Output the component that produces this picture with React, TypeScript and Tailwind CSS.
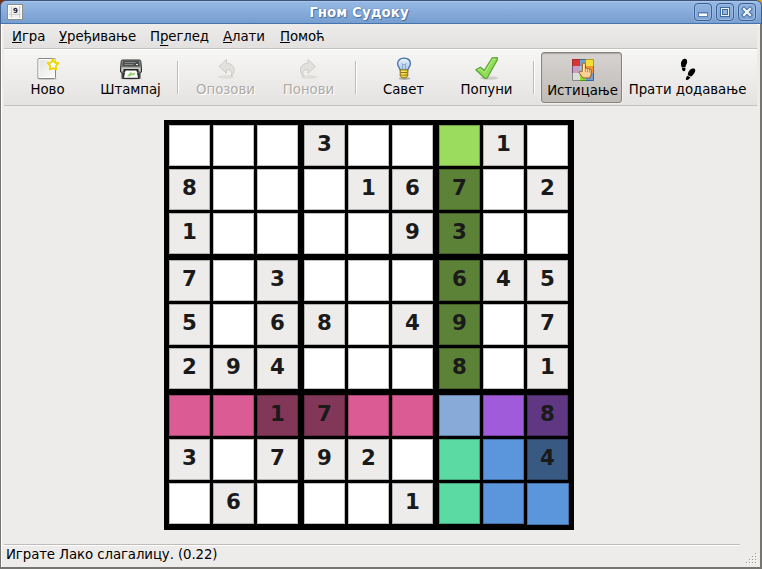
import type { ReactNode } from 'react';

const NUMBERS = [
  '...3...1.',
  '8...167.2',
  '1....93..',
  '7.3...645',
  '5.68.49.7',
  '294...8.1',
  '..17....8',
  '3.792...4',
  '.6...1...',
];

const TINTS: Record<string, string> = {
  '0-6': 'bg-[#9bdb5d]',
  '1-6': 'bg-[#5c8237]',
  '2-6': 'bg-[#5c8237]',
  '3-6': 'bg-[#5c8237]',
  '4-6': 'bg-[#5c8237]',
  '5-6': 'bg-[#5c8237]',
  '6-0': 'bg-[#db5b95]',
  '6-1': 'bg-[#db5b95]',
  '6-2': 'bg-[#823759]',
  '6-3': 'bg-[#823759]',
  '6-4': 'bg-[#db5b95]',
  '6-5': 'bg-[#db5b95]',
  '6-6': 'bg-[#87aad8]',
  '6-7': 'bg-[#a05bdb]',
  '6-8': 'bg-[#603782]',
  '7-6': 'bg-[#5bdba3]',
  '8-6': 'bg-[#5bdba3]',
  '7-7': 'bg-[#5b95db]',
  '8-7': 'bg-[#5b95db]',
  '8-8': 'bg-[#5b95db]',
  '7-8': 'bg-[#375982]',
};

function Cell({ row, col }: { row: number; col: number }) {
  const value = NUMBERS[row][col];
  const given = value !== '.';
  const tint = TINTS[`${row}-${col}`] ?? (given ? 'bg-[#edecea]' : 'bg-white');
  const last = row === 8 && col === 8;
  return (
    <div
      className={`flex items-center justify-center border border-black/25 pb-[3px] text-[21.33px] leading-none font-bold text-[#1a1a1a] ${last ? 'h-[42px] w-[42px]' : 'h-[41px] w-[41px]'} ${tint}`}
    >
      {given ? value : ''}
    </div>
  );
}

function Board() {
  const three = [0, 1, 2];
  return (
    <div className="grid h-[410px] w-[410px] shrink-0 grid-cols-[129px_129px_129px] grid-rows-[129px_129px_129px] gap-[6px] bg-black pt-[5px] pl-[5px]">
      {three.map((br) =>
        three.map((bc) => (
          <div key={`${br}${bc}`} className="grid grid-cols-[41px_41px_41px] grid-rows-[41px_41px_41px] gap-[3px]">
            {three.map((r) => three.map((c) => <Cell key={`${r}${c}`} row={br * 3 + r} col={bc * 3 + c} />))}
          </div>
        )),
      )}
    </div>
  );
}

function Tool({ icon, label, box, disabled }: { icon: ReactNode; label: string; box: string; disabled?: boolean }) {
  return (
    <div
      className={`flex shrink-0 flex-col items-center whitespace-nowrap ${box} ${disabled ? 'text-[#aeaba7] [text-shadow:1px_1px_0_#fff]' : ''}`}
    >
      {icon}
      <span className="mt-px leading-4 tracking-[-0.05px]">{label}</span>
    </div>
  );
}

function Separator() {
  return (
    <div className="flex w-3 shrink-0 justify-center pt-[11px]">
      <div className="h-[33px] w-[2px] border-l border-[#bebcb9] bg-white" />
    </div>
  );
}

const ICON = 'h-6 w-6 shrink-0';

function NewIcon() {
  return (
    <svg className={ICON} viewBox="0 0 24 24">
      <defs>
        <linearGradient id="paper" x1="0" y1="0" x2="1" y2="1">
          <stop offset="0" stopColor="#e2e2e0" />
          <stop offset="1" stopColor="#fdfdfd" />
        </linearGradient>
      </defs>
      <ellipse cx="11" cy="21.700" rx="10" ry="1" fill="#000" opacity=".2" />
      <rect x="2" y="1.500" width="17.500" height="20" rx="1" fill="url(#paper)" stroke="#858783" />
      <path d="M3 2.500h15.500v18H3z" fill="none" stroke="#fff" />
      <circle cx="17" cy="7.500" r="6" fill="#fff7a0" opacity=".65" />
      <path
        d="M17 2.500l1.700 3.100 3.600.6-2.500 2.600.5 3.600-3.300-1.300-3.300 1.300.5-3.600-2.500-2.600 3.600-.6z"
        fill="#fff"
        stroke="#edd400"
        strokeWidth="1.700"
        strokeLinejoin="round"
      />
    </svg>
  );
}

function PrintIcon() {
  return (
    <svg className={ICON} viewBox="0 0 24 24">
      <ellipse cx="12" cy="21.500" rx="11" ry="1.200" fill="#000" opacity=".25" />
      <path
        d="M3.500 3h17c1 0 1.200.6 1.300 1.500L22.500 12v3l-1.500 1v4.500c0 .6-.4 1-1 1H4c-.6 0-1-.4-1-1V16l-1.500-1v-3l.7-7.500C2.300 3.600 2.500 3 3.500 3z"
        fill="#8c8f8b"
        stroke="#2e302e"
      />
      <path d="M4 4h16l.7 5.500H3.300z" fill="#4b4e4f" />
      <path d="M5.500 5.500h11M5.500 7.500h9" stroke="#8d908e" strokeWidth=".9" />
      <path d="M17 7.500h2" stroke="#e8ece8" />
      <path d="M2.500 10.500h19v3.500h-19z" fill="#c9cbc7" />
      <path d="M4.500 12h15v3h-15z" fill="#1f211f" />
      <path d="M3.500 15.500h17v5.500h-17z" fill="#303230" />
      <path d="M6.500 13.500h11l1.500 7.200H5z" fill="#fbfcfb" />
      <path d="M8 19l3.500-4 2 1.500 3-1-1 2.500-3.500.5-1.500 1z" fill="#9bd17b" />
    </svg>
  );
}

function ArrowIcon({ flip }: { flip?: boolean }) {
  return (
    <svg className={ICON} viewBox="0 0 24 24">
      <ellipse cx="12" cy="20" rx="8" ry="1.800" fill="#dfdedb" />
      <path
        transform={flip ? 'translate(22.500 0) scale(-1 1)' : 'translate(1 0)'}
        d="M4 9.500L11.500 2.500v3.700c7 .2 10.500 7 4.500 13.500C17.500 15.200 16.500 12.500 11.500 12.500v3.700z"
        fill="#e2e1dd"
        stroke="#cccbc7"
        strokeLinejoin="round"
      />
    </svg>
  );
}

function BulbIcon() {
  return (
    <svg className={ICON} viewBox="0 0 24 24">
      <defs>
        <linearGradient id="bulb" x1="0" y1="0" x2="0" y2="1">
          <stop offset="0" stopColor="#eaf3fb" />
          <stop offset="1" stopColor="#a8c6e6" />
        </linearGradient>
      </defs>
      <ellipse cx="12.500" cy="21.500" rx="6" ry="1.500" fill="#000" opacity=".25" />
      <path
        d="M12 1.200C8 1.200 5.600 3.500 5.600 6.700c0 3 2.400 4 2.800 7h7.200c.4-3 2.800-4 2.800-7 0-3.200-2.400-5.500-6.400-5.500z"
        fill="url(#bulb)"
        stroke="#3f69a5"
        strokeWidth="1.200"
      />
      <path d="M9.500 6l1.500 2 1-1 1 1 1.500-2M10.500 8v5M13.500 8v5" fill="none" stroke="#7d9bc2" strokeWidth=".8" />
      <path d="M8.200 12.800h7.600v6.200l-2 1.800h-3.600l-2-1.800z" fill="#f0d23b" stroke="#7d610b" strokeWidth=".9" />
      <path d="M8.500 15.500h7M8.500 18h7" stroke="#927414" />
      <path d="M9.500 14.300h3M9.500 17h3" stroke="#fff3a0" strokeWidth=".9" />
    </svg>
  );
}

function CheckIcon() {
  return (
    <svg className={ICON} viewBox="0 0 24 24">
      <ellipse cx="14" cy="21" rx="9" ry="1.800" fill="#000" opacity=".13" />
      <path
        d="M.8 12.800l4.700-2.600 3.700 3.300L17.200.8l5-.2.200 2.200L12 21.200l-2 .3z"
        fill="#8fdc55"
        stroke="#5aa536"
        strokeWidth="1.200"
        strokeLinejoin="round"
      />
      <path d="M3 13.200l2.300-1.200 4.300 3.800L18 2.200h2.500" fill="none" stroke="#baf08f" />
    </svg>
  );
}

function HighlightIcon() {
  return (
    <svg className={ICON} viewBox="0 0 24 24">
      <path d="M1 1h8v7H1z" fill="#d93434" />
      <path d="M9 1h6v7H9z" fill="#729fcf" />
      <path d="M15 1h8v7h-8z" fill="#f2df38" />
      <path d="M1 8h8v7H1z" fill="#c4a0c2" />
      <path d="M9 8h6v7H9z" fill="#a6c2e4" />
      <path d="M15 8h8v7h-8z" fill="#f59432" />
      <path d="M1 15h8v8H1z" fill="#dcdcd8" />
      <path d="M9 15h6v8H9z" fill="#8ae234" />
      <path d="M15 15h8v8h-8z" fill="#719ed0" />
      <path d="M1.500 8V1.500H9" fill="none" stroke="#a52d2d" />
      <path d="M9 1.500h6" stroke="#416796" />
      <path d="M15 1.500h7.500V8" fill="none" stroke="#b49a24" />
      <path d="M1.500 8v7" stroke="#77527a" />
      <path d="M1.500 15v7.500H9" fill="none" stroke="#888a85" />
      <path d="M9 22.500h6" stroke="#4e9a06" />
      <path d="M15 22.500h7.500V15" fill="none" stroke="#3465a4" />
      <path d="M22.500 8v7" stroke="#b65c16" />
      <path
        d="M11.300 13.500V6.500c0-2 3.200-2 3.200 0v4c.6-.8 1.800-.5 2 .4.600-.6 1.700-.4 1.900.5.900-.5 1.900.1 1.900 1.100v3.500L18.800 20h-6.900L8.600 15.500c-1.100-1.700.5-2.800 1.700-1.800z"
        fill="#fbcf95"
        stroke="#94591b"
      />
      <path d="M14.500 11v3M16.500 11.500V14M18.400 12v2.500" stroke="#b77b39" strokeWidth=".7" />
      <path d="M12.600 6.500v7.500" stroke="#fff0d8" strokeWidth=".8" />
    </svg>
  );
}

function StepsIcon() {
  return (
    <svg className={ICON} viewBox="0 0 24 24">
      <path d="M7.700 2c2.300-1 3.900.6 3.400 3.500-.3 1.800-1.600 2.800-1.700 4.700l-3.500.2C4.100 7.500 5 3.300 7.700 2z" />
      <path d="M5.900 11l3.500-.2c.3 2-.3 3.500-1.500 3.500-1.200 0-1.900-1.500-2-3.300z" />
      <path d="M16.500 11.600c2.800-.8 3.500 1.400 2 4.200-1.100 2-2.100 3-3.600 3.800l-3-1.400c-.2-3 2.100-6 4.600-6.600z" />
      <path d="M11.400 18.800l3 1.400c-.8 1.700-2.600 3.100-4 2.700-1.200-.4-.3-2.700 1-4.100z" />
    </svg>
  );
}

function WindowButton({ children }: { children: ReactNode }) {
  return (
    <div className="h-[18px] w-[18px] rounded-[4px] border border-[#3b5e8f] bg-gradient-to-b from-[#8fb3df] to-[#7da3d4] shadow-[inset_0_0_0_1px_#9bbbe4,0_0_0_1px_rgba(165,194,231,0.6)]">
      <svg className="h-4 w-4" viewBox="0 0 16 16">
        {children}
      </svg>
    </div>
  );
}

const ACCEL = 'underline decoration-1 underline-offset-[1px] [text-decoration-skip-ink:none]';

export default function App() {
  return (
    <div className="flex h-[569px] w-[762px] flex-col overflow-hidden bg-[#edecea] font-['DejaVu_Sans','Noto_Sans',sans-serif] text-[13.33px] text-black">
      <header className="flex h-6 shrink-0 bg-gradient-to-r from-[#7c3010] to-[#d9a02c]">
        <div className="flex h-6 w-full items-center rounded-t-[6px] border-t border-r border-b border-l border-t-[#3b5478] border-r-[#3b5f8f] border-b-[#4773ad] border-l-[#3b5f8f] bg-gradient-to-b from-[#98b9e5] to-[#779ed0] shadow-[inset_0_1px_0_#a9c5eb]">
          <div className="ml-[6px] h-4 w-4 shrink-0">
            <svg className="h-4 w-4" viewBox="0 0 16 16">
              <rect x=".5" y=".5" width="15" height="15" fill="#f1f1ef" stroke="#8b8d89" />
              <path d="M1.500 1.500h13v13h-13z" fill="none" stroke="#fff" />
              <path d="M4.500 2v12M12.500 2v12M2 10.500h12" stroke="#cfd0cd" />
              <text x="6" y="9" fontFamily="DejaVu Sans" fontWeight="bold" fontSize="7" fill="#222">9</text>
            </svg>
          </div>
          <div className="flex-1 pt-px pl-px text-center leading-5 font-bold tracking-[0.1px] text-white [text-shadow:0_0_1px_#355f98,1px_1px_1px_#456fa8]">
            Гном Судоку
          </div>
          <div className="flex gap-1 pr-[5px]">
            <WindowButton>
              <path d="M3 8h10v5H3z" fill="#5680b4" />
              <path d="M4 9.500h8V12H4z" fill="#fff" />
            </WindowButton>
            <WindowButton>
              <path d="M3 3h10v10H3z" fill="#416b9f" />
              <path d="M4 4h8v8H4z" fill="#edf3fb" />
              <path d="M5 5h6v6H5z" fill="#416b9f" />
              <path d="M6 6h4v4H6z" fill="#91b4e0" />
            </WindowButton>
            <WindowButton>
              <path d="M5 5l6 6M11 5l-6 6" stroke="#416b9f" strokeWidth="4.200" strokeLinecap="square" />
              <path d="M5 5l6 6M11 5l-6 6" stroke="#f0f5fc" strokeWidth="2.300" strokeLinecap="square" />
            </WindowButton>
          </div>
        </div>
      </header>

      <div className="flex min-h-0 flex-1 flex-col border-r-2 border-b-2 border-l border-r-[#777572] border-b-[#777572] border-l-[#777572] px-[3px] shadow-[inset_1px_1px_0_#fff]">
        <nav className="flex h-[25px] shrink-0 border-b border-[#c4c2bf] bg-gradient-to-b from-[#edecea] to-[#e3e1df] pl-2 leading-[26px] tracking-[-0.1px] whitespace-nowrap">
          <div className="w-[47px]"><span className={ACCEL}>И</span>гра</div>
          <div className="w-[91px]"><span className={ACCEL}>У</span>ређивање</div>
          <div className="w-[73px]">П<span className="underline decoration-1 underline-offset-[4px] [text-decoration-skip-ink:none]">р</span>еглед</div>
          <div className="w-[57px]"><span className={ACCEL}>А</span>лати</div>
          <div><span className={ACCEL}>П</span>омоћ</div>
        </nav>

        <section className="flex h-[57px] shrink-0 border-t border-b border-t-white border-b-[#c4c2bf] bg-gradient-to-b from-[#f6f6f4] to-[#e5e3e1] pl-[2px]">
          <Tool box="w-[83px] pt-[7px]" icon={<NewIcon />} label="Ново" />
          <Tool box="w-[83px] pt-[7px]" icon={<PrintIcon />} label="Штампај" />
          <Separator />
          <Tool box="w-[83px] pt-[7px]" icon={<ArrowIcon />} label="Опозови" disabled />
          <Tool box="w-[83px] pt-[7px]" icon={<ArrowIcon flip />} label="Понови" disabled />
          <Separator />
          <Tool box="w-[83px] pt-[7px]" icon={<BulbIcon />} label="Савет" />
          <Tool box="w-[83px] pt-[7px]" icon={<CheckIcon />} label="Попуни" />
          <Separator />
          <Tool
            box="mt-[2px] ml-px h-[51px] w-[81px] rounded-[3px] border border-[#868481] bg-gradient-to-b from-[#d6d3d0] to-[#bfbbb7] pt-[5px] pl-[2px] shadow-[inset_0_1px_1px_#aaa7a3,0_0_0_1px_rgba(255,255,255,0.35)]"
            icon={<HighlightIcon />}
            label="Истицање"
          />
          <Tool box="ml-[2px] w-[127px] pt-[7px]" icon={<StepsIcon />} label="Прати додавање" />
        </section>

        <main className="flex h-[438px] shrink-0 justify-start pt-[14px] pl-[160px]">
          <Board />
        </main>

        <footer className="flex min-h-0 flex-1 items-start">
          <div className="h-full w-[736px] shrink-0 border-t border-[#bfbdba] pl-[2px] leading-[20px] tracking-[-0.1px] shadow-[inset_0_1px_0_#fff]">
            Играте Лако слагалицу. (0.22)
          </div>
          <svg className="mt-[9px] ml-[6px] h-3 w-3 shrink-0" viewBox="0 0 12 12">
            {[[9, 0], [6, 3], [9, 3], [3, 6], [6, 6], [9, 6], [0, 9], [3, 9], [6, 9], [9, 9]].map(([x, y]) => (
              <g key={`${x}-${y}`}>
                <rect x={x + 1} y={y + 1} width="1" height="1" fill="#fff" />
                <rect x={x} y={y} width="1" height="1" fill="#9b9894" />
              </g>
            ))}
          </svg>
        </footer>
      </div>
    </div>
  );
}
